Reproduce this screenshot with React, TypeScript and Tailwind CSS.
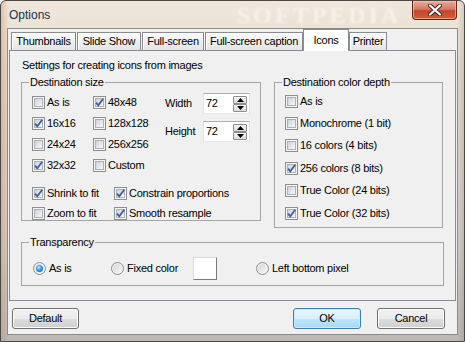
import React from 'react';

function CheckBox({ checked }: { checked?: boolean }) {
  return (
    <span className="relative flex h-[13px] w-[13px] shrink-0 items-center justify-center border border-[#8e8f8f] bg-[#f4f4f4]">
      <span className="h-[9px] w-[9px] border border-[#aeb2b8] bg-gradient-to-br from-[#cdd1d6] via-[#e3e5e8] to-[#f8f8f8]" />
      {checked && (
        <svg className="absolute left-0 top-0" width="11" height="11" viewBox="0 0 11 11">
          <path d="M2 5.6 L4.3 8.4 L9.2 1.8" fill="none" stroke="#3f5c9f" strokeWidth="1.8" />
        </svg>
      )}
    </span>
  );
}

function Radio({ checked }: { checked?: boolean }) {
  return (
    <span className="flex h-[13px] w-[13px] shrink-0 items-center justify-center rounded-full border border-[#8e8f8f] bg-gradient-to-br from-[#cfd2d6] to-[#fbfbfb] shadow-[inset_0_0_0_1px_#f2f2f2]">
      {checked && (
        <span className="h-[7px] w-[7px] rounded-full bg-[radial-gradient(circle_at_40%_35%,#c4ecff_0%,#3fa3e6_40%,#0b4a8a_100%)]" />
      )}
    </span>
  );
}

function CheckRow({ label, checked, h }: { label: string; checked?: boolean; h: string }) {
  return (
    <div className={`flex items-center gap-[2px] ${h}`}>
      <CheckBox checked={checked} />
      <span className="whitespace-nowrap">{label}</span>
    </div>
  );
}

function SpinButton({ up }: { up?: boolean }) {
  return (
    <span className="flex h-[8px] w-[14px] items-center justify-center rounded-[1px] border border-[#8d8d8d] bg-gradient-to-b from-[#f6f6f6] to-[#dcdcdc]">
      <svg width="7" height="4" viewBox="0 0 7 4">
        {up ? <path d="M0 4 L3.5 0 L7 4 Z" fill="#000" /> : <path d="M0 0 L3.5 4 L7 0 Z" fill="#000" />}
      </svg>
    </span>
  );
}

function Spin({ label, value }: { label: string; value: string }) {
  return (
    <div className="flex h-[21px] items-center">
      <span className="w-[38px]">{label}</span>
      <div className="flex h-[21px] w-[47px] items-center border border-[#abadb3] border-b-[#e3e9ef] border-l-[#e2e3ea] border-r-[#dbdfe6] bg-white pl-[2px] pr-[2px]">
        <span className="flex-1">{value}</span>
        <div className="flex flex-col">
          <SpinButton up />
          <SpinButton />
        </div>
      </div>
    </div>
  );
}

function Button({ label, primary }: { label: string; primary?: boolean }) {
  return (
    <div
      className={
        primary
          ? 'flex h-[21px] w-[68px] items-center justify-center rounded-[3px] border border-[#3c7fb1] bg-[linear-gradient(180deg,#eaf6fd_0%,#d9f0fc_50%,#bee6fd_50%,#a7d9f5_100%)] shadow-[inset_0_0_0_1px_#c9ecfd]'
          : 'flex h-[21px] items-center justify-center rounded-[3px] border border-[#707070] bg-[linear-gradient(180deg,#f2f2f2_0%,#ebebeb_50%,#dddddd_50%,#cfcfcf_100%)] shadow-[inset_0_0_0_1px_#fbfbfb]'
      }
    >
      {label}
    </div>
  );
}

const tabs = [
  { label: 'Thumbnails', cls: 'w-[65px] mr-[1px]' },
  { label: 'Slide Show', cls: 'w-[64px] mr-[1px]' },
  { label: 'Full-screen', cls: 'w-[62px] mr-[1px]' },
  { label: 'Full-screen caption', cls: 'w-[98px]' },
  { label: 'Icons', cls: 'w-[46px]', active: true },
  { label: 'Printer', cls: 'w-[38px]' },
];

export default function App() {
  return (
    <div className="relative flex h-[342px] w-[465px] flex-col overflow-hidden rounded-t-[6px] border border-[#4b4843] bg-[linear-gradient(90deg,rgba(190,125,80,0.35)_0px,rgba(190,125,80,0)_8px,rgba(0,0,0,0)_456px,rgba(90,90,90,0.25)_465px),linear-gradient(180deg,#efe7db_0%,#e3dacd_25%,#d4cec6_70%,#bdbab6_100%)] font-['Liberation_Sans',Arial,sans-serif] text-[11px] leading-[13px] tracking-[-0.25px] text-black">
      {/* title bar */}
      <div className="relative flex h-[27px] items-start">
        <span className="pointer-events-none absolute left-[236px] top-[1px] select-none font-['Liberation_Serif',serif] text-[24px] font-bold leading-[26px] tracking-[3px] text-white/50 blur-[1px]">
          SOFTPEDIA
        </span>
        <span className="ml-[8px] mt-[7px] text-[12px] leading-[14px] tracking-normal text-[#1b2f4d]">Options</span>
        <div className="flex-1" />
        <div className="relative mr-[7px] flex h-[19px] w-[45px] items-center justify-center rounded-b-[4px] border border-t-0 border-[#6d2618] bg-[linear-gradient(180deg,#e9a99a_0%,#d77a66_45%,#c3442c_55%,#d4603f_100%)] shadow-[inset_0_0_0_1px_rgba(255,210,200,0.5)]">
          <svg width="14" height="12" viewBox="0 0 14 12">
            <path d="M2 1.5 L12 10.5 M12 1.5 L2 10.5" stroke="#3a2a28" strokeWidth="4.2" strokeLinecap="round" />
            <path d="M2 1.5 L12 10.5 M12 1.5 L2 10.5" stroke="#ffffff" strokeWidth="2.2" strokeLinecap="round" />
          </svg>
        </div>
      </div>

      {/* client area */}
      <div className="mx-[6px] flex h-[307px] flex-col border border-[#8c8a86] bg-[#f0f0f0]">
        {/* tab strip */}
        <div className="flex h-[21px] items-end pl-[3px]">
          {tabs.map((t) =>
            t.active ? (
              <div
                key={t.label}
                className={`relative z-10 -mb-[1px] flex h-[22px] items-center justify-center border border-b-0 border-[#898c95] bg-white pb-[1px] ${t.cls}`}
              >
                {t.label}
              </div>
            ) : (
              <div
                key={t.label}
                className={`flex h-[18px] items-center justify-center border border-b-0 border-[#898c95] bg-gradient-to-b from-[#fbfbfb] to-[#e4e4e4] shadow-[inset_1px_1px_0_#ffffff] ${t.cls}`}
              >
                {t.label}
              </div>
            )
          )}
        </div>

        {/* tab page */}
        <div className="ml-[1px] flex h-[251px] w-[447px] flex-col border border-[#898c95] bg-[#f0f0f0] pl-[11px] pt-[8px]">
          <div className="ml-[1px]">Settings for creating icons from images</div>

          <div className="mt-[4px] flex items-start">
            {/* Destination size */}
            <fieldset className="h-[145px] w-[240px] border border-[#a5a5a5]">
              <legend className="ml-[7px] px-[1px]">Destination size</legend>
              <div className="flex pl-[10px] pt-[3px]">
                <div className="flex w-[61px] flex-col">
                  <CheckRow h="h-[21px]" label="As is" />
                  <CheckRow h="h-[21px]" label="16x16" checked />
                  <CheckRow h="h-[21px]" label="24x24" />
                  <CheckRow h="h-[21px]" label="32x32" checked />
                </div>
                <div className="flex w-[72px] flex-col">
                  <CheckRow h="h-[21px]" label="48x48" checked />
                  <CheckRow h="h-[21px]" label="128x128" />
                  <CheckRow h="h-[21px]" label="256x256" />
                  <CheckRow h="h-[21px]" label="Custom" />
                </div>
                <div className="flex flex-col gap-[7px] pt-[1px]">
                  <Spin label="Width" value="72" />
                  <Spin label="Height" value="72" />
                </div>
              </div>
              <div className="mt-[7px] flex pl-[10px]">
                <div className="flex w-[82px] flex-col">
                  <CheckRow h="h-[20px]" label="Shrink to fit" checked />
                  <CheckRow h="h-[20px]" label="Zoom to fit" />
                </div>
                <div className="flex flex-col">
                  <CheckRow h="h-[20px]" label="Constrain proportions" checked />
                  <CheckRow h="h-[20px]" label="Smooth resample" checked />
                </div>
              </div>
            </fieldset>

            {/* Destination color depth */}
            <fieldset className="ml-[13px] h-[152px] w-[169px] border border-[#a5a5a5]">
              <legend className="ml-[7px] px-[1px]">Destination color depth</legend>
              <div className="flex flex-col pl-[10px] pt-[1px]">
                <CheckRow h="h-[22.4px]" label="As is" />
                <CheckRow h="h-[22.4px]" label="Monochrome (1 bit)" />
                <CheckRow h="h-[22.4px]" label="16 colors (4 bits)" />
                <CheckRow h="h-[22.4px]" label="256 colors (8 bits)" checked />
                <CheckRow h="h-[22.4px]" label="True Color (24 bits)" />
                <CheckRow h="h-[22.4px]" label="True Color (32 bits)" checked />
              </div>
            </fieldset>
          </div>

          {/* Transparency */}
          <fieldset className="mt-[8px] h-[50px] w-[423px] border border-[#a5a5a5]">
            <legend className="ml-[7px] px-[1px]">Transparency</legend>
            <div className="mt-[8px] flex h-[23px] items-center pl-[11px]">
              <div className="flex w-[78px] items-center gap-[3px]">
                <Radio checked />
                <span>As is</span>
              </div>
              <div className="flex w-[82px] items-center gap-[3px]">
                <Radio />
                <span>Fixed color</span>
              </div>
              <div className="h-[23px] w-[24px] border border-[#dcdcdc] border-b-[#7a7a7a] border-r-[#7a7a7a] bg-white" />
              <div className="ml-[39px] flex items-center gap-[3px]">
                <Radio />
                <span>Left bottom pixel</span>
              </div>
            </div>
          </fieldset>
        </div>

        {/* buttons */}
        <div className="mt-[7px] flex items-center pl-[4px] pr-[12px]">
          <div className="w-[67px]">
            <Button label="Default" />
          </div>
          <div className="flex-1" />
          <Button label="OK" primary />
          <div className="ml-[16px] w-[68px]">
            <Button label="Cancel" />
          </div>
        </div>
      </div>
    </div>
  );
}
